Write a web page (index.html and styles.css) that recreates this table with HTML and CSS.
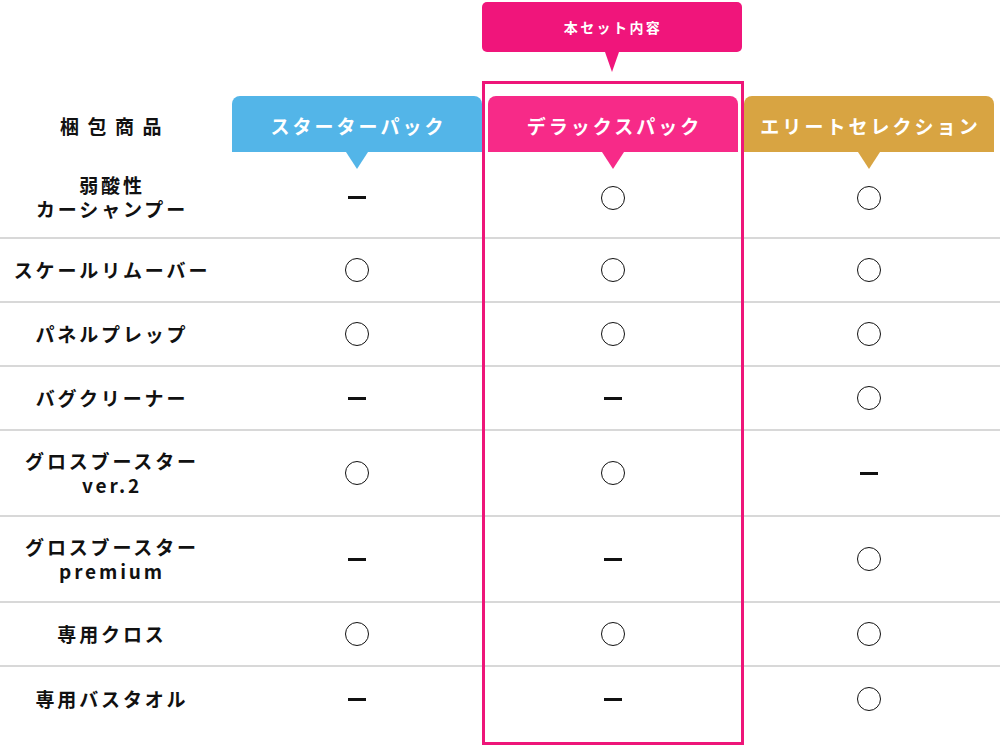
FILE: index.html
```html
<!DOCTYPE html>
<html lang="ja">
<head>
<meta charset="utf-8">
<link rel="stylesheet" href="styles.css">
</head>
<body>
<div class="page">
  <div class="callout">本セット内容</div>
  <div class="frame"></div>
  <div class="head-space"></div>
  <div class="row head">
    <div class="cell label head-label">梱包商品</div>
    <div class="cell"><div class="tab tab-blue">スターターパック</div></div>
    <div class="cell"><div class="tab tab-pink">デラックスパック</div></div>
    <div class="cell"><div class="tab tab-gold">エリートセレクション</div></div>
  </div>
  <div class="row first">
    <div class="cell label"><div class="lines"><div>弱酸性</div><div>カーシャンプー</div></div></div>
    <div class="cell"><span class="dash"></span></div>
    <div class="cell"><span class="circle"></span></div>
    <div class="cell"><span class="circle"></span></div>
  </div>
  <div class="row">
    <div class="cell label">スケールリムーバー</div>
    <div class="cell"><span class="circle"></span></div>
    <div class="cell"><span class="circle"></span></div>
    <div class="cell"><span class="circle"></span></div>
  </div>
  <div class="row">
    <div class="cell label">パネルプレップ</div>
    <div class="cell"><span class="circle"></span></div>
    <div class="cell"><span class="circle"></span></div>
    <div class="cell"><span class="circle"></span></div>
  </div>
  <div class="row">
    <div class="cell label">バグクリーナー</div>
    <div class="cell"><span class="dash"></span></div>
    <div class="cell"><span class="dash"></span></div>
    <div class="cell"><span class="circle"></span></div>
  </div>
  <div class="row tall">
    <div class="cell label"><div class="lines"><div>グロスブースター</div><div>ver.2</div></div></div>
    <div class="cell"><span class="circle"></span></div>
    <div class="cell"><span class="circle"></span></div>
    <div class="cell"><span class="dash"></span></div>
  </div>
  <div class="row tall">
    <div class="cell label"><div class="lines"><div>グロスブースター</div><div>premium</div></div></div>
    <div class="cell"><span class="dash"></span></div>
    <div class="cell"><span class="dash"></span></div>
    <div class="cell"><span class="circle"></span></div>
  </div>
  <div class="row">
    <div class="cell label">専用クロス</div>
    <div class="cell"><span class="circle"></span></div>
    <div class="cell"><span class="circle"></span></div>
    <div class="cell"><span class="circle"></span></div>
  </div>
  <div class="row last">
    <div class="cell label">専用バスタオル</div>
    <div class="cell"><span class="dash"></span></div>
    <div class="cell"><span class="dash"></span></div>
    <div class="cell"><span class="circle"></span></div>
  </div>
</div>
</body>
</html>
```

FILE: styles.css
```css
html, body {
  margin: 0;
  padding: 0;
  background: #fff;
}
body {
  font-family: "Noto Sans CJK JP", "Noto Sans", sans-serif;
  color: #111;
  overflow: hidden;
}
.page {
  position: relative;
  width: 1000px;
  height: 750px;
}
.head-space {
  height: 96px;
}
.callout {
  position: absolute;
  left: 482px;
  top: 2px;
  width: 260px;
  height: 50px;
  box-sizing: border-box;
  padding-left: 2px;
  background: #f0157b;
  border-radius: 5px;
  color: #fff;
  font-weight: 700;
  font-size: 14px;
  letter-spacing: 2.4px;
  display: flex;
  align-items: center;
  justify-content: center;
}
.callout::after {
  content: "";
  position: absolute;
  left: 123px;
  top: 50px;
  border-left: 7px solid transparent;
  border-right: 7px solid transparent;
  border-top: 20px solid #f0157b;
}
.frame {
  position: absolute;
  left: 482px;
  top: 81px;
  width: 262px;
  height: 664px;
  border: 3px solid #ee1679;
  box-sizing: border-box;
  z-index: 2;
  pointer-events: none;
}
.row {
  display: grid;
  grid-template-columns: 232px 256px 256px 256px;
  height: 64px;
  box-sizing: border-box;
  border-bottom: 2px solid #d8d8d8;
}
.row.head {
  height: 56px;
  border-bottom: none;
}
.row.first { height: 87px; }
.row.tall { height: 86px; }
.row.last { border-bottom: none; }
.cell {
  display: flex;
  align-items: center;
  justify-content: center;
  padding-right: 6px;
}
.cell.label {
  padding-right: 8px;
  text-align: center;
  font-weight: 700;
  font-size: 19px;
  line-height: 24px;
  letter-spacing: 0.15em;
}
.lines {
  display: flex;
  flex-direction: column;
  align-items: center;
}
.lines > div {
  height: 24px;
  line-height: 24px;
}
.row.first .cell { padding-top: 6px; }
.row.first .cell.label { padding-top: 4px; }
.cell.head-label {
  letter-spacing: 0.45em;
  padding-right: 2px;
  padding-top: 4px;
}
.tab {
  position: relative;
  width: 251px;
  height: 56px;
  border-radius: 8px 8px 0 0;
  color: #fff;
  font-weight: 700;
  font-size: 19px;
  letter-spacing: 0.16em;
  display: flex;
  align-items: center;
  justify-content: center;
  box-sizing: border-box;
  padding-left: 0.16em;
  padding-top: 2px;
}
.tab::after {
  content: "";
  position: absolute;
  left: 114px;
  top: 56px;
  border-left: 11px solid transparent;
  border-right: 11px solid transparent;
  border-top: 17px solid currentColor;
}
.tab-blue { background: #53b5e8; }
.tab-blue::after { border-top-color: #53b5e8; }
.tab-pink { background: #f72a88; }
.tab-pink::after { border-top-color: #f72a88; }
.tab-gold { background: #d8a442; }
.tab-gold::after { border-top-color: #d8a442; }
.circle {
  display: block;
  width: 24px;
  height: 24px;
  border: 1.5px solid #111;
  border-radius: 50%;
  box-sizing: border-box;
}
.dash {
  display: block;
  width: 18px;
  height: 3px;
  background: #111;
}
```
